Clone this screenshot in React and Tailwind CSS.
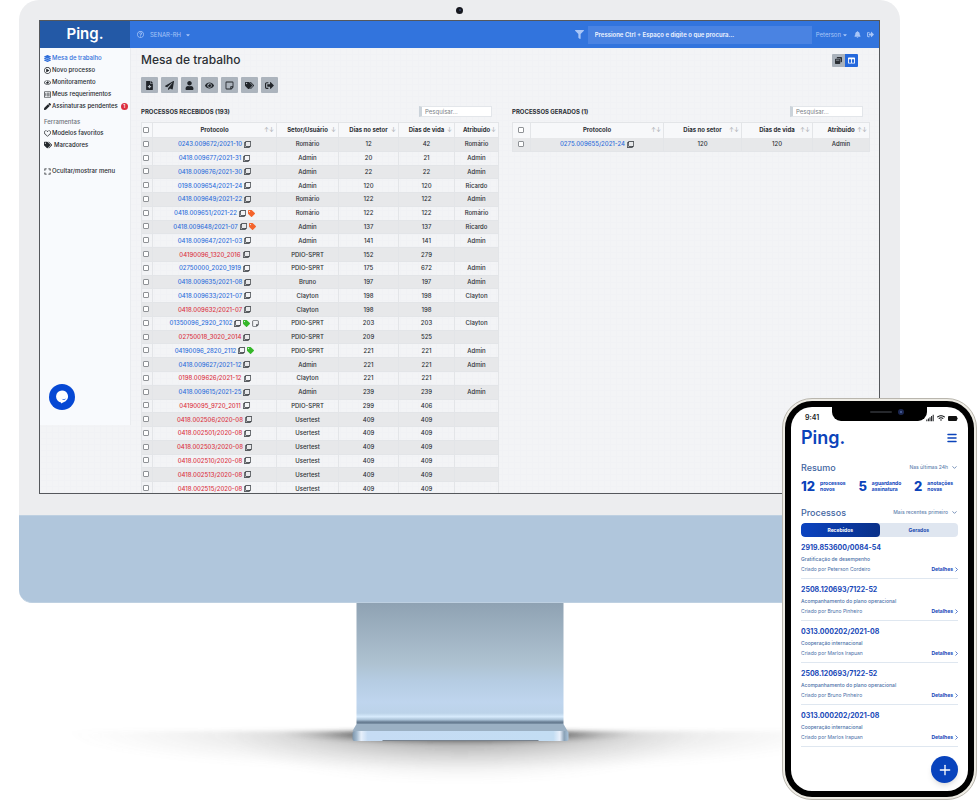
import React from "react";
import { FaLayerGroup, FaRegPlayCircle, FaRegEye, FaPen, FaRegHeart, FaTags, FaExpand, FaFileMedical, FaPaperPlane, FaUser, FaEye, FaRegStickyNote, FaSignOutAlt, FaRegQuestionCircle, FaFilter, FaBell, FaRegClone, FaTag, FaCaretDown, FaRegListAlt, FaWindowRestore, FaColumns, FaWifi, FaSignal } from "react-icons/fa";
import { ChevronDown, Menu, Plus } from "lucide-react";

const received = [
  ["0243.009672/2021-10", "Romário", 12, 42, "Romário"],
  ["0418.009677/2021-31", "Admin", 20, 21, "Admin"],
  ["0418.009676/2021-30", "Admin", 22, 22, "Admin"],
  ["0198.009654/2021-24", "Admin", 120, 120, "Ricardo"],
  ["0418.009649/2021-22", "Romário", 122, 122, "Admin"],
  ["0418.009651/2021-22", "Romário", 122, 122, "Romário", { tag: "text-[#f4642c]" }],
  ["0418.009648/2021-07", "Admin", 137, 137, "Ricardo", { tag: "text-[#f4642c]" }],
  ["0418.009647/2021-03", "Admin", 141, 141, "Admin"],
  ["04190096_1320_2016", "PDIO-SPRT", 152, 279, "", { late: true }],
  ["02750000_2020_1919", "PDIO-SPRT", 175, 672, "Admin"],
  ["0418.009635/2021-08", "Bruno", 197, 197, "Admin"],
  ["0418.009633/2021-07", "Clayton", 198, 198, "Clayton"],
  ["0418.009632/2021-07", "Clayton", 198, 198, "", { late: true }],
  ["01350096_2920_2102", "PDIO-SPRT", 203, 203, "Clayton", { tag: "text-[#35b729]", note: true }],
  ["02750018_3020_2014", "PDIO-SPRT", 209, 525, "", { late: true }],
  ["04190096_2820_2112", "PDIO-SPRT", 221, 221, "Admin", { tag: "text-[#35b729]" }],
  ["0418.009627/2021-12", "Admin", 221, 221, "Admin"],
  ["0198.009626/2021-12", "Clayton", 221, 221, "", { late: true }],
  ["0418.009615/2021-25", "Admin", 239, 239, "Admin"],
  ["04190095_9720_2011", "PDIO-SPRT", 299, 406, "", { late: true }],
  ["0418.002506/2020-08", "Usertest", 409, 409, "", { late: true }],
  ["0418.002501/2020-08", "Usertest", 409, 409, "", { late: true }],
  ["0418.002503/2020-08", "Usertest", 409, 409, "", { late: true }],
  ["0418.002510/2020-08", "Usertest", 409, 409, "", { late: true }],
  ["0418.002513/2020-08", "Usertest", 409, 409, "", { late: true }],
  ["0418.002515/2020-08", "Usertest", 409, 409, "", { late: true }],
];

const phoneItems = [
  ["2919.853600/0084-54", "Gratificação de desempenho", "Peterson Cordeiro"],
  ["2508.120693/7122-52", "Acompanhamento do plano operacional", "Bruno Pinheiro"],
  ["0313.000202/2021-08", "Cooperação internacional", "Marlos Irapuan"],
  ["2508.120693/7122-52", "Acompanhamento do plano operacional", "Bruno Pinheiro"],
  ["0313.000202/2021-08", "Cooperação internacional", "Marlos Irapuan"],
];

const menu = [
  ["Mesa de trabalho", FaLayerGroup],
  ["Novo processo", FaRegPlayCircle],
  ["Monitoramento", FaRegEye],
  ["Meus requerimentos", FaRegListAlt],
  ["Assinaturas pendentes", FaPen],
];

const tools = [
  ["Novo documento", FaFileMedical],
  ["Enviar", FaPaperPlane],
  ["Atribuir", FaUser],
  ["Acompanhar", FaEye],
  ["Anotação", FaRegStickyNote],
  ["Marcadores", FaTags],
  ["Concluir", FaSignOutAlt],
];

function Check({ label }) {
  return (
    <input
      type="checkbox"
      aria-label={label}
      className="mx-auto block size-[6px] appearance-none rounded-[1px] border border-[#8f9296] bg-white checked:bg-[#2f6fdb]"
    />
  );
}

function HeadCell({ children, arrows }) {
  return (
    <th className="relative border-l border-[#e3e5e8] p-0 font-bold">
      {children}
      <span className="absolute inset-y-0 right-[2px] flex items-center font-normal text-[#a2a6ab]">{arrows}</span>
    </th>
  );
}

function Protocol({ id, late, tag, note }) {
  return (
    <div className="flex items-center justify-center gap-[2px]">
      <a href="#processo" className={late ? "text-[#dc3545]" : "text-[#2f6fdb]"}>{id}</a>
      <FaRegClone className="size-[7px]" />
      {tag && <FaTag className={`size-[7px] ${tag}`} />}
      {note && <FaRegStickyNote className="size-[7px]" />}
    </div>
  );
}

function PanelTitle({ children, label }) {
  return (
    <div className="flex h-[11px] items-center justify-between pr-[6px]">
      <h2 className="text-[6px] font-bold leading-[9px]">{children}</h2>
      <input
        aria-label={label}
        placeholder="Pesquisar..."
        className="h-[11px] w-[73px] border border-l-[3px] border-[#e3e6ea] border-l-[#cbd3da] bg-white px-[3px] text-[6px] leading-none placeholder:text-[#7b8187]"
      />
    </div>
  );
}

function Sidebar() {
  return (
    <nav className="flex h-[377px] w-[91px] shrink-0 flex-col border-r border-[#e9ebee] bg-[#f8fafd] pl-1 pt-1 text-[6px] font-medium leading-[12px] text-[#24282d]">
      {menu.map(([label, Icon], i) => (
        <a key={label} href="#menu" className={`flex items-center gap-px whitespace-nowrap ${i === 0 ? "text-[#2f6fdb]" : ""}`}>
          <Icon className="size-[7px] shrink-0" />
          {label}
          {i === 4 && <span className="ml-[2px] flex size-[7px] shrink-0 items-center justify-center rounded-full bg-[#dc2f3f] text-[5px] leading-none text-white">1</span>}
        </a>
      ))}
      <h3 className="mt-1 leading-[11px] text-[#6b7178]">Ferramentas</h3>
      <a href="#modelos" className="flex items-center gap-px"><FaRegHeart className="size-[7px]" />Modelos favoritos</a>
      <a href="#marcadores" className="flex items-center gap-[2px]"><FaTags className="size-[8px]" />Marcadores</a>
      <button className="mt-[14px] flex items-center gap-px whitespace-nowrap text-left"><FaExpand className="size-[7px]" />Ocultar/mostrar menu</button>
    </nav>
  );
}

function Workspace() {
  return (
    <main className="min-w-0 flex-1 px-[10px] pt-[3px]">
      <div className="flex items-center justify-between pr-[11px]">
        <h1 className="text-[12px] font-medium leading-[18px]">Mesa de trabalho</h1>
        <div className="flex">
          <button aria-label="Janelas" className="flex size-[13px] items-center justify-center rounded-l-[1px] bg-[#aab2bb]"><FaWindowRestore className="size-[7px]" /></button>
          <button aria-label="Colunas" className="flex size-[13px] items-center justify-center rounded-r-[1px] bg-[#2468dc] text-white"><FaColumns className="size-[7px]" /></button>
        </div>
      </div>
      <div className="mt-2 flex gap-[3px]">
        {tools.map(([label, Icon]) => (
          <button key={label} aria-label={label} className="flex h-4 items-center justify-center rounded-[1px] bg-[#acb4bd] px-1 text-[#202429]">
            <Icon className="h-[9px] w-auto" />
          </button>
        ))}
      </div>
      <div className="mt-[13px] grid grid-cols-2 gap-[14px]">
        <section>
          <PanelTitle label="Pesquisar recebidos">PROCESSOS RECEBIDOS (193)</PanelTitle>
          <table className="mt-[5px] h-[374px] w-full table-fixed border-collapse border border-[#e3e5e8] text-center text-[6px] font-medium leading-[12px]">
            <colgroup>
              <col className="w-[11px]" /><col className="w-[124px]" /><col className="w-[62px]" /><col className="w-[60px]" /><col className="w-[56px]" /><col className="w-[44px]" />
            </colgroup>
            <thead>
              <tr className="h-[15px] bg-[#f7f8fa]">
                <th className="p-0 pb-px pr-[2px]"><Check label="Selecionar todos os recebidos" /></th>
                <HeadCell arrows="↑↓">Protocolo</HeadCell>
                <HeadCell arrows="↓">Setor/Usuário</HeadCell>
                <HeadCell arrows="↓">Dias no setor</HeadCell>
                <HeadCell arrows="↓">Dias de vida</HeadCell>
                <HeadCell arrows="↓">Atribuído</HeadCell>
              </tr>
            </thead>
            <tbody>
              {received.map(([id, sector, days, life, owner, extra]) => (
                <tr key={id} className="border-t border-[#e3e5e8] odd:bg-[#e7e8ea]">
                  <td className="p-0 pb-px pr-[2px]"><Check label={`Selecionar ${id}`} /></td>
                  <td className="border-l border-[#e3e5e8] p-0"><Protocol id={id} {...extra} /></td>
                  <td className="border-l border-[#e3e5e8] p-0">{sector}</td>
                  <td className="border-l border-[#e3e5e8] p-0">{days}</td>
                  <td className="border-l border-[#e3e5e8] p-0">{life}</td>
                  <td className="border-l border-[#e3e5e8] p-0">{owner}</td>
                </tr>
              ))}
            </tbody>
          </table>
        </section>
        <section>
          <PanelTitle label="Pesquisar gerados">PROCESSOS GERADOS (1)</PanelTitle>
          <table className="mt-[5px] w-full table-fixed border-collapse border border-[#e3e5e8] text-center text-[6px] font-medium leading-[12px]">
            <colgroup>
              <col className="w-[18px]" /><col className="w-[133px]" /><col className="w-[78px]" /><col className="w-[71px]" /><col className="w-[57px]" />
            </colgroup>
            <thead>
              <tr className="h-[15px] bg-[#f7f8fa]">
                <th className="p-0 pb-px pr-[2px]"><Check label="Selecionar todos os gerados" /></th>
                <HeadCell arrows="↑↓">Protocolo</HeadCell>
                <HeadCell arrows="↑↓">Dias no setor</HeadCell>
                <HeadCell arrows="↑↓">Dias de vida</HeadCell>
                <HeadCell arrows="↑↓">Atribuído</HeadCell>
              </tr>
            </thead>
            <tbody>
              <tr className="h-[14px] bg-[#e7e8ea]">
                <td className="p-0 pb-px pr-[2px]"><Check label="Selecionar 0275.009655/2021-24" /></td>
                <td className="border-l border-[#e3e5e8] p-0"><Protocol id="0275.009655/2021-24" /></td>
                <td className="border-l border-[#e3e5e8] p-0">120</td>
                <td className="border-l border-[#e3e5e8] p-0">120</td>
                <td className="border-l border-[#e3e5e8] p-0">Admin</td>
              </tr>
            </tbody>
          </table>
        </section>
      </div>
    </main>
  );
}

function TopBar() {
  return (
    <header className="flex h-[27px] items-center bg-[#3274dd] text-[6px] text-[#a9c6f7]">
      <a href="#inicio" className="flex h-full w-[90px] items-center justify-center bg-[#2359a6] text-[15px] font-semibold text-white">Ping.</a>
      <FaRegQuestionCircle className="ml-[7px] size-[7px]" />
      <button className="ml-[6px] flex items-center gap-1">SENAR-RH<FaCaretDown className="size-[6px]" /></button>
      <FaFilter className="ml-auto size-[9px]" />
      <input
        aria-label="Procurar"
        placeholder="Pressione Ctrl + Espaço e digite o que procura..."
        className="ml-1 h-[18px] w-[224px] bg-[#4a83e2] px-[7px] text-[6px] font-semibold text-white placeholder:text-[#eef4ff]"
      />
      <button className="ml-1 flex items-center gap-px">Peterson<FaCaretDown className="size-[6px]" /></button>
      <button aria-label="Notificações" className="ml-[6px]"><FaBell className="size-[7px]" /></button>
      <button aria-label="Sair" className="ml-[6px] mr-[5px]"><FaSignOutAlt className="size-[7px]" /></button>
    </header>
  );
}

function Monitor() {
  return (
    <div className="ml-[19px] mr-[80px]">
      <div className="h-[515px] rounded-t-[20px] bg-[#ecedef] px-5">
        <div className="flex h-5 items-center justify-center">
          <div className="flex size-[7px] items-center justify-center rounded-full bg-[#17191f]"><div className="size-[2px] rounded-full bg-[#39466b]" /></div>
        </div>
        <div className="relative h-[474px] overflow-hidden border border-[#55585c] bg-[#f3f4f6] text-[#2b2f34]">
          <TopBar />
          <div className="flex bg-[linear-gradient(#f1f2f5_1px,transparent_1px),linear-gradient(90deg,#f1f2f5_1px,transparent_1px)] bg-[size:6px_6px]">
            <Sidebar />
            <Workspace />
          </div>
          <button aria-label="Abrir conversa" className="absolute bottom-[83px] left-[9px] flex size-[26px] items-center justify-center rounded-full bg-[#0648d4]">
            <svg viewBox="0 0 14 14" className="size-[14px]">
              <path d="M7 .5a6 6 0 0 1 3.6 10.8L6 13.6v-1.2A6 6 0 0 1 7 .5Z" fill="#fff" />
              <path d="M6.5 8.8q2.4.8 4.4-.4-1.2 2.4-4.4.4Z" fill="#0648d4" />
            </svg>
          </button>
        </div>
      </div>
      <div className="h-[88px] rounded-b-[13px] border-y border-[#bed0e1] bg-[#b0c6dc]" />
      <svg viewBox="0 0 880 190" className="h-[190px] w-full">
        <defs>
          <linearGradient id="neck" x2="0" y2="1">
            <stop offset="0" stopColor="#8fa2b3" />
            <stop offset=".5" stopColor="#aec2d1" />
            <stop offset=".64" stopColor="#b5cce2" />
            <stop offset=".82" stopColor="#bfd5ee" />
            <stop offset=".91" stopColor="#bcd3e9" />
            <stop offset=".94" stopColor="#d7ebfd" />
            <stop offset=".965" stopColor="#aac1d6" />
            <stop offset=".985" stopColor="#64798e" />
            <stop offset="1" stopColor="#7e94a8" />
          </linearGradient>
          <linearGradient id="foot">
            <stop offset="0" stopColor="#7d95ab" />
            <stop offset=".02" stopColor="#a4bbd0" />
            <stop offset=".04" stopColor="#e7f0fb" />
            <stop offset=".07" stopColor="#c6dcf4" />
            <stop offset=".93" stopColor="#c3ddf3" />
            <stop offset=".96" stopColor="#e9f0fb" />
            <stop offset=".98" stopColor="#8aa1b6" />
            <stop offset="1" stopColor="#a9c3da" />
          </linearGradient>
          <radialGradient id="shade">
            <stop offset="0" stopColor="#444" stopOpacity=".3" />
            <stop offset=".35" stopColor="#555" stopOpacity=".2" />
            <stop offset=".7" stopColor="#777" stopOpacity=".09" />
            <stop offset="1" stopColor="#999" stopOpacity="0" />
          </radialGradient>
          <radialGradient id="contact">
            <stop offset=".6" stopColor="#333" stopOpacity=".5" />
            <stop offset=".8" stopColor="#555" stopOpacity=".2" />
            <stop offset="1" stopColor="#888" stopOpacity="0" />
          </radialGradient>
          <clipPath id="floor"><rect y="128" width="880" height="62" /></clipPath>
          <filter id="soften" x="-10%" y="-40%" width="120%" height="180%"><feGaussianBlur stdDeviation="2" /></filter>
        </defs>
        <g filter="url(#soften)">
          <g clipPath="url(#floor)">
            <ellipse cx="440" cy="130" rx="390" ry="38" fill="url(#shade)" />
            <ellipse cx="440" cy="130" rx="240" ry="50" fill="url(#shade)" />
            <ellipse cx="440" cy="131" rx="180" ry="11" fill="url(#contact)" />
          </g>
        </g>
        <path d="M337 0H544V121H337Z" fill="url(#neck)" />
        <path d="M337 121H544L548 128H333Z" fill="#9bb0c3" />
        <rect x="333" y="128" width="216" height="10" rx="2" fill="url(#foot)" />
        <path d="M363 137H519V138H363Z" fill="#77828e" />
      </svg>
    </div>
  );
}

function SectionHead({ title, option }) {
  return (
    <div className="flex h-3 items-center justify-between">
      <h2 className="text-[9px] font-medium leading-none text-[#3f659f]">{title}</h2>
      <button className="flex items-center gap-[3px] text-[5px] font-medium leading-none text-[#6684b0]">{option}<ChevronDown className="size-[7px]" strokeWidth={3} /></button>
    </div>
  );
}

function Stat({ value, top, bottom }) {
  return (
    <div className="flex items-center gap-[5px] text-[#0b43ba]">
      <strong className="text-[13px] font-extrabold leading-none">{value}</strong>
      <span className="text-[5px] font-bold leading-[6px]">{top}<br />{bottom}</span>
    </div>
  );
}

function Phone() {
  return (
    <aside className="absolute right-[3px] top-[398px] h-[402px] w-[195px] rounded-[30px] border border-[#b9b6ae] bg-[#eeece5] p-[2px]">
      <div className="h-full rounded-[27px] bg-black p-[6px]">
        <div className="relative flex h-full flex-col rounded-[21px] bg-white px-[10px]">
          <div className="absolute inset-x-0 top-0 mx-auto flex h-[14px] w-[95px] items-start justify-center gap-[6px] rounded-b-[9px] bg-black">
            <span className="ml-[14px] mt-1 h-[2px] w-[22px] rounded-full bg-[#26282c]" />
            <span className="mt-[2px] flex size-[6px] items-center justify-center rounded-full bg-[#1b2751]"><span className="size-[2px] rounded-full bg-[#5168a5]" /></span>
          </div>
          <div className="mt-[6px] flex h-[10px] items-center justify-between pl-1 text-[7px] font-semibold text-[#15171a]">
            9:41
            <span className="flex items-center gap-[3px]">
              <FaSignal className="size-2" />
              <FaWifi className="size-2" />
              <svg viewBox="0 0 10 5" className="h-[5px] w-[10px]"><rect width="9" height="5" rx="1" fill="#111" /><path d="M9.4 1.7v1.6" stroke="#111" strokeWidth=".7" /></svg>
            </span>
          </div>
          <div className="mt-[5px] flex h-5 items-center justify-between text-[#0b43ba]">
            <span className="text-[18px] font-semibold leading-none">Ping.</span>
            <button aria-label="Menu"><Menu className="size-3" strokeWidth={3} /></button>
          </div>
          <div className="mt-[13px]"><SectionHead title="Resumo" option="Nas últimas 24h" /></div>
          <div className="mt-[6px] flex h-[14px] items-center justify-between pr-[5px]">
            <Stat value="12" top="processos" bottom="novos" />
            <Stat value="5" top="aguardando" bottom="assinatura" />
            <Stat value="2" top="anotações" bottom="novas" />
          </div>
          <div className="mt-[13px]"><SectionHead title="Processos" option="Mais recentes primeiro" /></div>
          <div className="mt-[5px] grid h-[14px] shrink-0 grid-cols-2 overflow-hidden rounded-[4px] bg-[#dfe6f0] text-[5px] font-bold leading-none">
            <button className="rounded-[4px] bg-gradient-to-r from-[#0b43c0] to-[#0a3189] text-white">Recebidos</button>
            <button className="text-[#1a4bb0]">Gerados</button>
          </div>
          <ul>
            {phoneItems.map(([id, title, author], i) => (
              <li key={i} className="h-[42px] border-b border-[#dfe7f0] pt-[6px]">
                <h3 className="text-[7px] font-bold leading-[10px] text-[#1748b8]">{id}</h3>
                <p className="mt-px text-[5px] font-medium leading-[10px] text-[#4a6fa8]">{title}</p>
                <div className="flex items-center justify-between text-[5px] leading-[10px]">
                  <span className="text-[#4a6fa8]">Criado por {author}</span>
                  <a href="#detalhes" className="flex items-center gap-[2px] font-bold text-[#1748b8]">
                    Detalhes
                    <svg viewBox="0 0 3 5" className="h-[5px] w-[3px]"><path d="m.5.5 2 2-2 2" fill="none" stroke="currentColor" strokeWidth=".7" /></svg>
                  </a>
                </div>
              </li>
            ))}
          </ul>
          <button aria-label="Adicionar" className="absolute bottom-[8px] right-[10px] flex size-[27px] items-center justify-center rounded-full bg-[#0843bd] text-white shadow-md"><Plus className="size-4" strokeWidth={2} /></button>
        </div>
      </div>
    </aside>
  );
}

export default function App() {
  return (
    <div className="relative min-h-[802px] w-full overflow-hidden bg-white font-['Inter','Liberation_Sans',sans-serif]">
      <Monitor />
      <Phone />
    </div>
  );
}
